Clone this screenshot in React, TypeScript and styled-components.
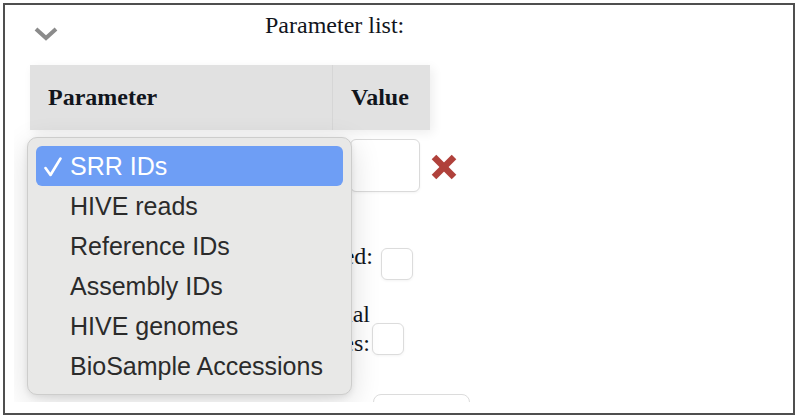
import React from "react";
import styled, { createGlobalStyle } from "styled-components";

const GlobalStyle = createGlobalStyle`
  body {
    margin: 0;
    background: #ffffff;
    font-family: "Liberation Serif", "Times New Roman", serif;
    color: #11151c;
  }
`;

const options = [
  "SRR IDs",
  "HIVE reads",
  "Reference IDs",
  "Assembly IDs",
  "HIVE genomes",
  "BioSample Accessions",
];

const Chevron: React.FC = () => (
  <StyledChevron width="24" height="14" viewBox="0 0 24 14">
    <polyline
      points="2,2 12,11 22,2"
      fill="none"
      stroke="#8b8b8b"
      strokeWidth="4"
      strokeLinejoin="miter"
    />
  </StyledChevron>
);

const RemoveIcon: React.FC = () => (
  <StyledRemove width="26" height="26" viewBox="0 0 26 26">
    <g stroke="#b0413b" strokeWidth="6.5" strokeLinecap="butt">
      <line x1="3" y1="3" x2="23" y2="23" />
      <line x1="23" y1="3" x2="3" y2="23" />
    </g>
  </StyledRemove>
);

const CheckMark: React.FC = () => (
  <svg width="18" height="20" viewBox="0 0 18 20">
    <polyline
      points="1.5,11 6.5,18 16.5,1.5"
      fill="none"
      stroke="#ffffff"
      strokeWidth="2.6"
      strokeLinecap="round"
      strokeLinejoin="round"
    />
  </svg>
);

const App: React.FC = () => {
  return (
    <>
      <GlobalStyle />
      <Page>
        <Frame>
          <Content>
            <TopBar>
              <Chevron />
              <Title>Parameter list:</Title>
            </TopBar>

            <HeaderRow>
              <HeaderCell $pad={18}>Parameter</HeaderCell>
              <HeaderCell $pad={18} $divider>
                Value
              </HeaderCell>
            </HeaderRow>

            <ParamRow>
              <SelectBox>SRR IDs</SelectBox>
              <ValueInput />
              <RemoveIcon />
            </ParamRow>

            <OptionRow $end={399} $gap={8} $top={40}>
              <OptionLabel>Files compressed:</OptionLabel>
              <CheckBox $shift={16} />
            </OptionRow>

            <OptionRow $end={390} $gap={2} $top={20}>
              <OptionLabel>
                Keep original
                <br />
                filenames:
              </OptionLabel>
              <CheckBox $shift={20} />
            </OptionRow>

            <OptionRow $end={456} $gap={0} $top={36}>
              <WideInput />
            </OptionRow>

            <Menu>
              {options.map((option, index) => (
                <MenuItem key={option} $selected={index === 0}>
                  <Check>{index === 0 && <CheckMark />}</Check>
                  {option}
                </MenuItem>
              ))}
            </Menu>
          </Content>
        </Frame>
      </Page>
    </>
  );
};

export default App;

const Page = styled.div`
  padding: 3px;
  width: 800px;
  height: 420px;
  box-sizing: border-box;
`;

const Frame = styled.div`
  width: 792px;
  height: 412px;
  box-sizing: border-box;
  border: 2px solid #4f4f4f;
  padding: 0 14px 11px 9px;
`;

const Content = styled.div`
  position: relative;
  height: 100%;
  overflow: hidden;
`;

const TopBar = styled.div`
  display: flex;
  align-items: flex-start;
  height: 60px;
`;

const StyledChevron = styled.svg`
  margin: 22px 0 0 20px;
`;

const Title = styled.div`
  margin: 6px 0 0 207px;
  font-size: 24px;
  line-height: 28px;
`;

const HeaderRow = styled.div`
  display: grid;
  grid-template-columns: 302px 98px;
  width: 400px;
  height: 65px;
  margin-left: 16px;
  background: #e1e1e1;
  box-shadow: 3px 3px 10px rgba(0, 0, 0, 0.07);
`;

const HeaderCell = styled.div<{ $pad: number; $divider?: boolean }>`
  display: flex;
  align-items: center;
  padding-left: ${(p) => p.$pad}px;
  font-size: 24px;
  font-weight: bold;
  border-left: ${(p) => (p.$divider ? "1px solid #d6d6d6" : "none")};
`;

const ParamRow = styled.div`
  display: grid;
  grid-template-columns: 302px 98px 40px;
  margin-left: 16px;
  height: 62px;
`;

const SelectBox = styled.div`
  margin: 12px 0 0 10px;
  height: 40px;
  font-family: "Liberation Sans", Arial, sans-serif;
  font-size: 24px;
`;

const ValueInput = styled.div`
  margin: 9px 0 0 18px;
  width: 70px;
  height: 53px;
  box-sizing: border-box;
  border: 1px solid #dadada;
  border-radius: 6px;
  background: #fff;
  box-shadow: 0 1px 3px rgba(0, 0, 0, 0.05);
`;

const StyledRemove = styled.svg`
  margin: 24px 0 0 1px;
`;

const OptionRow = styled.div<{ $end: number; $gap: number; $top: number }>`
  display: flex;
  align-items: center;
  justify-content: flex-end;
  gap: ${(p) => p.$gap}px;
  width: ${(p) => p.$end}px;
  margin-top: ${(p) => p.$top}px;
`;

const OptionLabel = styled.div`
  text-align: right;
  font-size: 24px;
  line-height: 29px;
`;

const CheckBox = styled.div<{ $shift: number }>`
  width: 32px;
  height: 32px;
  box-sizing: border-box;
  margin-top: ${(p) => p.$shift}px;
  border: 1px solid #dcdcdc;
  border-radius: 6px;
  background: #fff;
  box-shadow: 0 1px 3px rgba(0, 0, 0, 0.05);
`;

const WideInput = styled.div`
  width: 97px;
  height: 40px;
  box-sizing: border-box;
  border: 1px solid #dcdcdc;
  border-radius: 8px;
  background: #fff;
`;

const Menu = styled.div`
  position: absolute;
  left: 13px;
  top: 132px;
  width: 325px;
  box-sizing: border-box;
  padding: 8px;
  background: #e8e8e7;
  border: 1px solid #cdcdcc;
  border-radius: 10px;
  box-shadow: 0 8px 30px rgba(0, 0, 0, 0.14), 0 2px 6px rgba(0, 0, 0, 0.08);
`;

const MenuItem = styled.div<{ $selected: boolean }>`
  display: flex;
  align-items: center;
  height: 40px;
  padding-left: 8px;
  border-radius: 6px;
  font-family: "Liberation Sans", Arial, sans-serif;
  font-size: 25px;
  color: ${(p) => (p.$selected ? "#ffffff" : "#2b2b2b")};
  background: ${(p) => (p.$selected ? "#6e9ef5" : "transparent")};
`;

const Check = styled.span`
  display: flex;
  align-items: center;
  width: 26px;
  padding-top: 2px;
`;
